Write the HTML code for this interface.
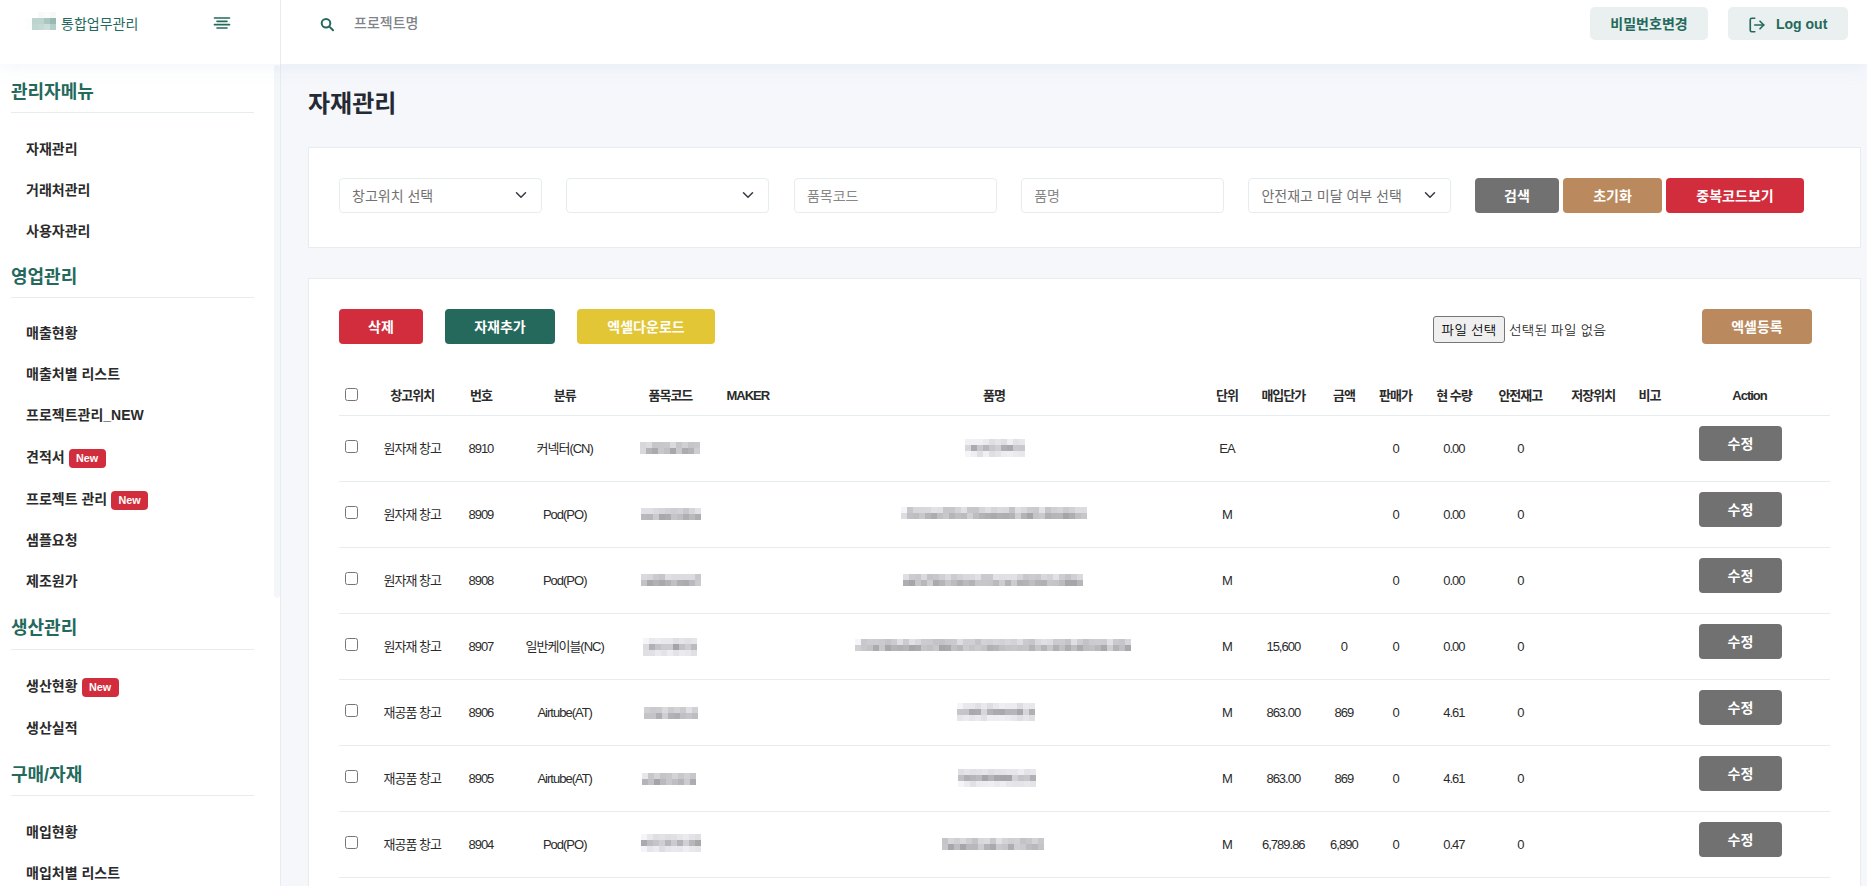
<!DOCTYPE html><html lang="ko"><head><meta charset="utf-8"><title>자재관리</title><style>
*{box-sizing:border-box;}
html,body{margin:0;padding:0;}
body{width:1867px;height:886px;overflow:hidden;background:#f5f7fb;font-family:"Liberation Sans", "Noto Sans CJK KR", sans-serif;font-size:14px;color:#2b2b2b;position:relative;}
.abs{position:absolute;}
#hdr{position:absolute;left:0;top:0;width:1867px;height:64px;background:#fff;box-shadow:0 0 20px rgba(149,175,215,.17);z-index:5;}
#hdr .vline{position:absolute;left:280px;top:0;width:1px;height:64px;background:#e6edef;}
#side{position:absolute;left:0;top:64px;width:281px;height:822px;background:#fff;border-right:1px solid #e6edef;z-index:2;}
#thumb{position:absolute;left:274px;top:1px;width:6px;height:533px;background:#f4f6fa;border-radius:3px;}
.logo-t{position:absolute;left:61px;top:13px;font-size:14px;line-height:22px;color:#24695c;white-space:nowrap;}
.sec-t{position:absolute;left:11px;font-size:18px;font-weight:700;color:#24695c;line-height:24px;white-space:nowrap;}
.sec-l{position:absolute;left:11px;width:243px;height:1px;background:#e6edef;}
.mi{position:absolute;left:26px;font-size:14px;font-weight:700;color:#2b2b2b;line-height:20px;white-space:nowrap;}
.badge{display:inline-block;vertical-align:middle;background:#d22d3d;color:#fff;font-size:10.8px;font-weight:700;line-height:19px;height:19px;padding:0 7.4px;border-radius:4px;margin-left:4px;position:relative;top:.5px;}
.hbtn{position:absolute;top:7px;height:33px;background:#e9f0ef;border-radius:5px;color:#24695c;font-weight:700;font-size:14px;line-height:35px;text-align:center;white-space:nowrap;}
h3.pt{position:absolute;left:308px;top:87px;margin:0;font-size:24px;line-height:34px;font-weight:700;color:#242934;white-space:nowrap;}
.card{position:absolute;left:308px;width:1553px;background:#fff;border:1px solid #e6edef;}
.fc{position:absolute;top:178px;height:35px;width:203px;border:1px solid #e6edef;border-radius:4px;background:#fff;color:#717171;font-size:14px;line-height:34px;padding-left:12px;white-space:nowrap;}
.fc.ph{color:#878787;}
.fc svg{position:absolute;right:12.1px;top:10.2px;}
.btn{position:absolute;display:block;border:0;padding:0;margin:0;font-family:inherit;cursor:pointer;height:35px;border-radius:4px;color:#fff;font-weight:700;font-size:14px;line-height:37px;text-align:center;white-space:nowrap;overflow:hidden;}
.b-gray{background:#717171;}
.b-tan{background:#ba895d;}
.b-red{background:#d22d3d;}
.b-teal{background:#24695c;}
.b-yel{background:#e2c636;}
.th{position:absolute;top:386px;height:20px;line-height:20px;font-size:13px;font-weight:700;letter-spacing:-1px;color:#2b2b2b;text-align:center;white-space:nowrap;transform:translateX(-50%);}
.td{position:absolute;height:20px;line-height:20px;font-size:13px;letter-spacing:-1px;color:#2b2b2b;text-align:center;white-space:nowrap;transform:translateX(-50%);}
.hl{position:absolute;left:339px;width:1491px;height:1px;background:#e6edef;}
.cb{position:absolute;left:345px;width:13px;height:13px;margin:0;padding:0;}
.mz{position:absolute;display:flex;flex-wrap:wrap;overflow:hidden;}
.mz i{display:block;width:6px;height:6px;}
</style></head><body>
<div id="hdr">
<div class="abs" style="left:26px;top:12px;width:30px;height:18px;display:flex;flex-wrap:wrap;">
<i style="display:block;width:6px;height:6px;background:#fff"></i>
<i style="display:block;width:6px;height:6px;background:#fff"></i>
<i style="display:block;width:6px;height:6px;background:#f7faf9"></i>
<i style="display:block;width:6px;height:6px;background:#fbfcfc"></i>
<i style="display:block;width:6px;height:6px;background:#f6f9f8"></i>
<i style="display:block;width:6px;height:6px;background:#fcfdfd"></i>
<i style="display:block;width:6px;height:6px;background:#bcd3ce"></i>
<i style="display:block;width:6px;height:6px;background:#bdd3ce"></i>
<i style="display:block;width:6px;height:6px;background:#a9c6c0"></i>
<i style="display:block;width:6px;height:6px;background:#98bab3"></i>
<i style="display:block;width:6px;height:6px;background:#fcfdfd"></i>
<i style="display:block;width:6px;height:6px;background:#c0d6d1"></i>
<i style="display:block;width:6px;height:6px;background:#c4d8d4"></i>
<i style="display:block;width:6px;height:6px;background:#ccdeda"></i>
<i style="display:block;width:6px;height:6px;background:#b5cec9"></i>
</div>
<div class="logo-t">통합업무관리</div>
<svg class="abs" style="left:212.2px;top:12.7px" width="20" height="20" viewBox="0 0 24 24" fill="none" stroke="#24695c" stroke-width="2" stroke-linecap="round" stroke-linejoin="round"><line x1="18" y1="10" x2="6" y2="10"/><line x1="21" y1="6" x2="3" y2="6"/><line x1="21" y1="14" x2="3" y2="14"/><line x1="18" y1="18" x2="6" y2="18"/></svg>
<div class="vline"></div>
<svg class="abs" style="left:320px;top:17px" width="15" height="15" viewBox="0 0 15 15" fill="none" stroke="#24695c" stroke-width="2" stroke-linecap="round"><circle cx="6" cy="6.2" r="4.3"/><line x1="9.4" y1="9.6" x2="13" y2="13.2"/></svg>
<div class="abs" style="left:354px;top:12px;font-size:14px;line-height:22px;color:#808389;font-weight:500;white-space:nowrap;">프로젝트명</div>
<div class="hbtn" style="left:1590px;width:118px;">비밀번호변경</div>
<div class="hbtn" style="left:1728px;width:120px;text-align:left;padding-left:48px;">Log out<svg class="abs" style="left:19.9px;top:8.9px" width="18" height="18" viewBox="0 0 24 24" fill="none" stroke="#24695c" stroke-width="2.2" stroke-linecap="round" stroke-linejoin="round"><path d="M9 21H5a2 2 0 0 1-2-2V5a2 2 0 0 1 2-2h4"/><polyline points="16 17 21 12 16 7"/><line x1="21" y1="12" x2="9" y2="12"/></svg></div>
</div>
<div id="side"><div id="thumb"></div>
<div class="sec-t" style="top:16px">관리자메뉴</div>
<div class="sec-l" style="top:48px"></div>
<div class="mi" style="top:75px">자재관리</div>
<div class="mi" style="top:116px">거래처관리</div>
<div class="mi" style="top:157px">사용자관리</div>
<div class="sec-t" style="top:201px">영업관리</div>
<div class="sec-l" style="top:233px"></div>
<div class="mi" style="top:259px">매출현황</div>
<div class="mi" style="top:300px">매출처별 리스트</div>
<div class="mi" style="top:341px">프로젝트관리_NEW</div>
<div class="mi" style="top:383px">견적서<span class="badge">New</span></div>
<div class="mi" style="top:425px">프로젝트 관리<span class="badge">New</span></div>
<div class="mi" style="top:466px">샘플요청</div>
<div class="mi" style="top:507px">제조원가</div>
<div class="sec-t" style="top:552px">생산관리</div>
<div class="sec-l" style="top:585px"></div>
<div class="mi" style="top:612px">생산현황<span class="badge">New</span></div>
<div class="mi" style="top:654px">생산실적</div>
<div class="sec-t" style="top:699px">구매/자재</div>
<div class="sec-l" style="top:731px"></div>
<div class="mi" style="top:758px">매입현황</div>
<div class="mi" style="top:799px">매입처별 리스트</div>
</div>
<h3 class="pt">자재관리</h3>
<div class="card" style="top:147px;height:101px;"></div>
<div class="fc" style="left:339.0px">창고위치 선택<svg width="16" height="12" viewBox="0 0 16 16" preserveAspectRatio="xMidYMid meet" fill="none" stroke="#343a40" stroke-width="2" stroke-linecap="round" stroke-linejoin="round"><path d="m2 5 6 6 6-6"/></svg></div>
<div class="fc" style="left:566.4px"><svg width="16" height="12" viewBox="0 0 16 16" preserveAspectRatio="xMidYMid meet" fill="none" stroke="#343a40" stroke-width="2" stroke-linecap="round" stroke-linejoin="round"><path d="m2 5 6 6 6-6"/></svg></div>
<div class="fc ph" style="left:793.9px">품목코드</div>
<div class="fc ph" style="left:1021.2px">품명</div>
<div class="fc" style="left:1248.4px">안전재고 미달 여부 선택<svg width="16" height="12" viewBox="0 0 16 16" preserveAspectRatio="xMidYMid meet" fill="none" stroke="#343a40" stroke-width="2" stroke-linecap="round" stroke-linejoin="round"><path d="m2 5 6 6 6-6"/></svg></div>
<button type="button" class="btn b-gray" style="left:1475px;top:178px;width:84px;">검색</button>
<button type="button" class="btn b-tan" style="left:1563px;top:178px;width:99px;">초기화</button>
<button type="button" class="btn b-red" style="left:1666px;top:178px;width:138px;">중복코드보기</button>
<div class="card" style="top:278px;height:640px;"></div>
<button type="button" class="btn b-red" style="left:339px;top:309px;width:84px;">삭제</button>
<button type="button" class="btn b-teal" style="left:445px;top:309px;width:110px;">자재추가</button>
<button type="button" class="btn b-yel" style="left:577px;top:309px;width:138px;">엑셀다운로드</button>
<div class="abs" style="left:1433px;top:316px;width:72px;height:26.5px;border:1px solid #767676;border-radius:3px;background:#efefef;font-family:'Liberation Sans','NanumGothic',sans-serif;font-size:13.33px;line-height:27px;letter-spacing:.2px;text-align:center;color:#000;white-space:nowrap;overflow:hidden;">파일 선택</div>
<div class="abs" style="left:1509px;top:319.4px;font-family:'Liberation Sans','NanumGothic',sans-serif;font-size:13.33px;line-height:24px;letter-spacing:.2px;color:#2b2b2b;white-space:nowrap;">선택된 파일 없음</div>
<button type="button" class="btn b-tan" style="left:1702px;top:309px;width:110px;">엑셀등록</button>
<input type="checkbox" class="cb" style="top:388px">
<div class="th" style="left:412.2px">창고위치</div>
<div class="th" style="left:480.9px">번호</div>
<div class="th" style="left:564.7px">분류</div>
<div class="th" style="left:670.4px">품목코드</div>
<div class="th" style="left:747.8px">MAKER</div>
<div class="th" style="left:994.0px">품명</div>
<div class="th" style="left:1226.9px">단위</div>
<div class="th" style="left:1283.3px">매입단가</div>
<div class="th" style="left:1343.9px">금액</div>
<div class="th" style="left:1395.5px">판매가</div>
<div class="th" style="left:1453.9px">현 수량</div>
<div class="th" style="left:1520.3px">안전재고</div>
<div class="th" style="left:1593.2px">저장위치</div>
<div class="th" style="left:1649.5px">비고</div>
<div class="th" style="left:1749.5px">Action</div>
<div class="hl" style="top:415px"></div>
<input type="checkbox" class="cb" style="top:440px">
<div class="td" style="left:412.2px;top:439.0px">원자재 창고</div>
<div class="td" style="left:480.9px;top:439.0px">8910</div>
<div class="td" style="left:564.7px;top:439.0px">커넥터(CN)</div>
<div class="td" style="left:1226.9px;top:439.0px">EA</div>
<div class="td" style="left:1395.5px;top:439.0px">0</div>
<div class="td" style="left:1453.9px;top:439.0px">0.00</div>
<div class="td" style="left:1520.3px;top:439.0px">0</div>
<div class="mz" style="left:640px;top:442px;width:60px;height:12px"><i style="background:rgb(215,215,219)"></i><i style="background:rgb(220,220,224)"></i><i style="background:rgb(198,198,202)"></i><i style="background:rgb(199,199,203)"></i><i style="background:rgb(201,201,205)"></i><i style="background:rgb(218,218,222)"></i><i style="background:rgb(198,198,202)"></i><i style="background:rgb(208,208,212)"></i><i style="background:rgb(197,197,201)"></i><i style="background:rgb(200,200,204)"></i><i style="background:rgb(217,217,221)"></i><i style="background:rgb(180,180,184)"></i><i style="background:rgb(170,170,174)"></i><i style="background:rgb(200,200,204)"></i><i style="background:rgb(192,192,196)"></i><i style="background:rgb(168,168,172)"></i><i style="background:rgb(201,201,205)"></i><i style="background:rgb(172,172,176)"></i><i style="background:rgb(179,179,183)"></i><i style="background:rgb(205,205,209)"></i></div>
<div class="mz" style="left:965px;top:439px;width:60px;height:18px"><i style="background:rgb(240,240,244)"></i><i style="background:rgb(240,240,244)"></i><i style="background:rgb(240,240,244)"></i><i style="background:rgb(234,234,238)"></i><i style="background:rgb(223,223,227)"></i><i style="background:rgb(229,229,233)"></i><i style="background:rgb(223,223,227)"></i><i style="background:rgb(239,239,243)"></i><i style="background:rgb(226,226,230)"></i><i style="background:rgb(231,231,235)"></i><i style="background:rgb(216,216,220)"></i><i style="background:rgb(172,172,176)"></i><i style="background:rgb(201,201,205)"></i><i style="background:rgb(184,184,188)"></i><i style="background:rgb(200,200,204)"></i><i style="background:rgb(208,208,212)"></i><i style="background:rgb(176,176,180)"></i><i style="background:rgb(171,171,175)"></i><i style="background:rgb(202,202,206)"></i><i style="background:rgb(201,201,205)"></i><i style="background:rgb(245,245,249)"></i><i style="background:rgb(239,239,243)"></i><i style="background:rgb(224,224,228)"></i><i style="background:rgb(240,240,244)"></i><i style="background:rgb(223,223,227)"></i><i style="background:rgb(228,228,232)"></i><i style="background:rgb(237,237,241)"></i><i style="background:rgb(239,239,243)"></i><i style="background:rgb(235,235,239)"></i><i style="background:rgb(232,232,236)"></i></div>
<button type="button" class="btn b-gray" style="left:1699px;top:426px;width:83px;">수정</button>
<div class="hl" style="top:481px"></div>
<input type="checkbox" class="cb" style="top:506px">
<div class="td" style="left:412.2px;top:505.0px">원자재 창고</div>
<div class="td" style="left:480.9px;top:505.0px">8909</div>
<div class="td" style="left:564.7px;top:505.0px">Pod(PO)</div>
<div class="td" style="left:1226.9px;top:505.0px">M</div>
<div class="td" style="left:1395.5px;top:505.0px">0</div>
<div class="td" style="left:1453.9px;top:505.0px">0.00</div>
<div class="td" style="left:1520.3px;top:505.0px">0</div>
<div class="mz" style="left:641px;top:508px;width:60px;height:12px"><i style="background:rgb(224,224,228)"></i><i style="background:rgb(224,224,228)"></i><i style="background:rgb(218,218,222)"></i><i style="background:rgb(214,214,218)"></i><i style="background:rgb(210,210,214)"></i><i style="background:rgb(206,206,210)"></i><i style="background:rgb(210,210,214)"></i><i style="background:rgb(200,200,204)"></i><i style="background:rgb(214,214,218)"></i><i style="background:rgb(226,226,230)"></i><i style="background:rgb(186,186,190)"></i><i style="background:rgb(183,183,187)"></i><i style="background:rgb(203,203,207)"></i><i style="background:rgb(169,169,173)"></i><i style="background:rgb(172,172,176)"></i><i style="background:rgb(197,197,201)"></i><i style="background:rgb(191,191,195)"></i><i style="background:rgb(175,175,179)"></i><i style="background:rgb(186,186,190)"></i><i style="background:rgb(174,174,178)"></i></div>
<div class="mz" style="left:901px;top:507px;width:186px;height:12px"><i style="background:rgb(245,245,249)"></i><i style="background:rgb(199,199,203)"></i><i style="background:rgb(215,215,219)"></i><i style="background:rgb(216,216,220)"></i><i style="background:rgb(217,217,221)"></i><i style="background:rgb(226,226,230)"></i><i style="background:rgb(224,224,228)"></i><i style="background:rgb(199,199,203)"></i><i style="background:rgb(200,200,204)"></i><i style="background:rgb(212,212,216)"></i><i style="background:rgb(225,225,229)"></i><i style="background:rgb(199,199,203)"></i><i style="background:rgb(198,198,202)"></i><i style="background:rgb(214,214,218)"></i><i style="background:rgb(223,223,227)"></i><i style="background:rgb(213,213,217)"></i><i style="background:rgb(219,219,223)"></i><i style="background:rgb(217,217,221)"></i><i style="background:rgb(196,196,200)"></i><i style="background:rgb(224,224,228)"></i><i style="background:rgb(217,217,221)"></i><i style="background:rgb(205,205,209)"></i><i style="background:rgb(202,202,206)"></i><i style="background:rgb(226,226,230)"></i><i style="background:rgb(198,198,202)"></i><i style="background:rgb(208,208,212)"></i><i style="background:rgb(213,213,217)"></i><i style="background:rgb(203,203,207)"></i><i style="background:rgb(210,210,214)"></i><i style="background:rgb(220,220,224)"></i><i style="background:rgb(220,220,224)"></i><i style="background:rgb(221,221,225)"></i><i style="background:rgb(193,193,197)"></i><i style="background:rgb(190,190,194)"></i><i style="background:rgb(200,200,204)"></i><i style="background:rgb(182,182,186)"></i><i style="background:rgb(173,173,177)"></i><i style="background:rgb(192,192,196)"></i><i style="background:rgb(200,200,204)"></i><i style="background:rgb(182,182,186)"></i><i style="background:rgb(191,191,195)"></i><i style="background:rgb(187,187,191)"></i><i style="background:rgb(208,208,212)"></i><i style="background:rgb(189,189,193)"></i><i style="background:rgb(179,179,183)"></i><i style="background:rgb(174,174,178)"></i><i style="background:rgb(170,170,174)"></i><i style="background:rgb(176,176,180)"></i><i style="background:rgb(174,174,178)"></i><i style="background:rgb(179,179,183)"></i><i style="background:rgb(207,207,211)"></i><i style="background:rgb(179,179,183)"></i><i style="background:rgb(165,165,169)"></i><i style="background:rgb(196,196,200)"></i><i style="background:rgb(202,202,206)"></i><i style="background:rgb(176,176,180)"></i><i style="background:rgb(181,181,185)"></i><i style="background:rgb(183,183,187)"></i><i style="background:rgb(165,165,169)"></i><i style="background:rgb(174,174,178)"></i><i style="background:rgb(191,191,195)"></i><i style="background:rgb(199,199,203)"></i></div>
<button type="button" class="btn b-gray" style="left:1699px;top:492px;width:83px;">수정</button>
<div class="hl" style="top:547px"></div>
<input type="checkbox" class="cb" style="top:572px">
<div class="td" style="left:412.2px;top:571.0px">원자재 창고</div>
<div class="td" style="left:480.9px;top:571.0px">8908</div>
<div class="td" style="left:564.7px;top:571.0px">Pod(PO)</div>
<div class="td" style="left:1226.9px;top:571.0px">M</div>
<div class="td" style="left:1395.5px;top:571.0px">0</div>
<div class="td" style="left:1453.9px;top:571.0px">0.00</div>
<div class="td" style="left:1520.3px;top:571.0px">0</div>
<div class="mz" style="left:641px;top:574px;width:60px;height:12px"><i style="background:rgb(218,218,222)"></i><i style="background:rgb(215,215,219)"></i><i style="background:rgb(203,203,207)"></i><i style="background:rgb(198,198,202)"></i><i style="background:rgb(224,224,228)"></i><i style="background:rgb(220,220,224)"></i><i style="background:rgb(220,220,224)"></i><i style="background:rgb(220,220,224)"></i><i style="background:rgb(220,220,224)"></i><i style="background:rgb(201,201,205)"></i><i style="background:rgb(195,195,199)"></i><i style="background:rgb(168,168,172)"></i><i style="background:rgb(177,177,181)"></i><i style="background:rgb(169,169,173)"></i><i style="background:rgb(178,178,182)"></i><i style="background:rgb(193,193,197)"></i><i style="background:rgb(175,175,179)"></i><i style="background:rgb(172,172,176)"></i><i style="background:rgb(186,186,190)"></i><i style="background:rgb(203,203,207)"></i></div>
<div class="mz" style="left:903px;top:574px;width:180px;height:12px"><i style="background:rgb(223,223,227)"></i><i style="background:rgb(204,204,208)"></i><i style="background:rgb(201,201,205)"></i><i style="background:rgb(218,218,222)"></i><i style="background:rgb(196,196,200)"></i><i style="background:rgb(199,199,203)"></i><i style="background:rgb(208,208,212)"></i><i style="background:rgb(219,219,223)"></i><i style="background:rgb(204,204,208)"></i><i style="background:rgb(211,211,215)"></i><i style="background:rgb(217,217,221)"></i><i style="background:rgb(218,218,222)"></i><i style="background:rgb(225,225,229)"></i><i style="background:rgb(202,202,206)"></i><i style="background:rgb(202,202,206)"></i><i style="background:rgb(226,226,230)"></i><i style="background:rgb(224,224,228)"></i><i style="background:rgb(225,225,229)"></i><i style="background:rgb(225,225,229)"></i><i style="background:rgb(214,214,218)"></i><i style="background:rgb(200,200,204)"></i><i style="background:rgb(204,204,208)"></i><i style="background:rgb(201,201,205)"></i><i style="background:rgb(216,216,220)"></i><i style="background:rgb(211,211,215)"></i><i style="background:rgb(225,225,229)"></i><i style="background:rgb(205,205,209)"></i><i style="background:rgb(196,196,200)"></i><i style="background:rgb(208,208,212)"></i><i style="background:rgb(218,218,222)"></i><i style="background:rgb(174,174,178)"></i><i style="background:rgb(166,166,170)"></i><i style="background:rgb(198,198,202)"></i><i style="background:rgb(184,184,188)"></i><i style="background:rgb(206,206,210)"></i><i style="background:rgb(170,170,174)"></i><i style="background:rgb(181,181,185)"></i><i style="background:rgb(198,198,202)"></i><i style="background:rgb(188,188,192)"></i><i style="background:rgb(175,175,179)"></i><i style="background:rgb(187,187,191)"></i><i style="background:rgb(179,179,183)"></i><i style="background:rgb(199,199,203)"></i><i style="background:rgb(199,199,203)"></i><i style="background:rgb(197,197,201)"></i><i style="background:rgb(186,186,190)"></i><i style="background:rgb(205,205,209)"></i><i style="background:rgb(179,179,183)"></i><i style="background:rgb(204,204,208)"></i><i style="background:rgb(177,177,181)"></i><i style="background:rgb(180,180,184)"></i><i style="background:rgb(190,190,194)"></i><i style="background:rgb(179,179,183)"></i><i style="background:rgb(177,177,181)"></i><i style="background:rgb(198,198,202)"></i><i style="background:rgb(196,196,200)"></i><i style="background:rgb(187,187,191)"></i><i style="background:rgb(166,166,170)"></i><i style="background:rgb(166,166,170)"></i><i style="background:rgb(182,182,186)"></i></div>
<button type="button" class="btn b-gray" style="left:1699px;top:558px;width:83px;">수정</button>
<div class="hl" style="top:613px"></div>
<input type="checkbox" class="cb" style="top:638px">
<div class="td" style="left:412.2px;top:637.0px">원자재 창고</div>
<div class="td" style="left:480.9px;top:637.0px">8907</div>
<div class="td" style="left:564.7px;top:637.0px">일반케이블(NC)</div>
<div class="td" style="left:1226.9px;top:637.0px">M</div>
<div class="td" style="left:1283.3px;top:637.0px">15,600</div>
<div class="td" style="left:1343.9px;top:637.0px">0</div>
<div class="td" style="left:1395.5px;top:637.0px">0</div>
<div class="td" style="left:1453.9px;top:637.0px">0.00</div>
<div class="td" style="left:1520.3px;top:637.0px">0</div>
<div class="mz" style="left:643px;top:638px;width:54px;height:18px"><i style="background:rgb(245,245,249)"></i><i style="background:rgb(233,233,237)"></i><i style="background:rgb(236,236,240)"></i><i style="background:rgb(233,233,237)"></i><i style="background:rgb(233,233,237)"></i><i style="background:rgb(224,224,228)"></i><i style="background:rgb(229,229,233)"></i><i style="background:rgb(225,225,229)"></i><i style="background:rgb(229,229,233)"></i><i style="background:rgb(220,220,224)"></i><i style="background:rgb(178,178,182)"></i><i style="background:rgb(195,195,199)"></i><i style="background:rgb(204,204,208)"></i><i style="background:rgb(204,204,208)"></i><i style="background:rgb(165,165,169)"></i><i style="background:rgb(195,195,199)"></i><i style="background:rgb(206,206,210)"></i><i style="background:rgb(187,187,191)"></i><i style="background:rgb(224,224,228)"></i><i style="background:rgb(225,225,229)"></i><i style="background:rgb(234,234,238)"></i><i style="background:rgb(228,228,232)"></i><i style="background:rgb(237,237,241)"></i><i style="background:rgb(227,227,231)"></i><i style="background:rgb(235,235,239)"></i><i style="background:rgb(232,232,236)"></i><i style="background:rgb(224,224,228)"></i></div>
<div class="mz" style="left:855px;top:639px;width:276px;height:12px"><i style="background:rgb(245,245,249)"></i><i style="background:rgb(200,200,204)"></i><i style="background:rgb(205,205,209)"></i><i style="background:rgb(205,205,209)"></i><i style="background:rgb(203,203,207)"></i><i style="background:rgb(196,196,200)"></i><i style="background:rgb(204,204,208)"></i><i style="background:rgb(224,224,228)"></i><i style="background:rgb(204,204,208)"></i><i style="background:rgb(225,225,229)"></i><i style="background:rgb(217,217,221)"></i><i style="background:rgb(204,204,208)"></i><i style="background:rgb(203,203,207)"></i><i style="background:rgb(196,196,200)"></i><i style="background:rgb(195,195,199)"></i><i style="background:rgb(201,201,205)"></i><i style="background:rgb(203,203,207)"></i><i style="background:rgb(222,222,226)"></i><i style="background:rgb(207,207,211)"></i><i style="background:rgb(208,208,212)"></i><i style="background:rgb(196,196,200)"></i><i style="background:rgb(211,211,215)"></i><i style="background:rgb(208,208,212)"></i><i style="background:rgb(213,213,217)"></i><i style="background:rgb(210,210,214)"></i><i style="background:rgb(215,215,219)"></i><i style="background:rgb(211,211,215)"></i><i style="background:rgb(221,221,225)"></i><i style="background:rgb(203,203,207)"></i><i style="background:rgb(198,198,202)"></i><i style="background:rgb(217,217,221)"></i><i style="background:rgb(224,224,228)"></i><i style="background:rgb(221,221,225)"></i><i style="background:rgb(203,203,207)"></i><i style="background:rgb(204,204,208)"></i><i style="background:rgb(196,196,200)"></i><i style="background:rgb(223,223,227)"></i><i style="background:rgb(206,206,210)"></i><i style="background:rgb(195,195,199)"></i><i style="background:rgb(204,204,208)"></i><i style="background:rgb(206,206,210)"></i><i style="background:rgb(204,204,208)"></i><i style="background:rgb(225,225,229)"></i><i style="background:rgb(202,202,206)"></i><i style="background:rgb(198,198,202)"></i><i style="background:rgb(215,215,219)"></i><i style="background:rgb(208,208,212)"></i><i style="background:rgb(200,200,204)"></i><i style="background:rgb(195,195,199)"></i><i style="background:rgb(171,171,175)"></i><i style="background:rgb(200,200,204)"></i><i style="background:rgb(168,168,172)"></i><i style="background:rgb(180,180,184)"></i><i style="background:rgb(177,177,181)"></i><i style="background:rgb(182,182,186)"></i><i style="background:rgb(167,167,171)"></i><i style="background:rgb(171,171,175)"></i><i style="background:rgb(197,197,201)"></i><i style="background:rgb(193,193,197)"></i><i style="background:rgb(200,200,204)"></i><i style="background:rgb(166,166,170)"></i><i style="background:rgb(169,169,173)"></i><i style="background:rgb(193,193,197)"></i><i style="background:rgb(185,185,189)"></i><i style="background:rgb(204,204,208)"></i><i style="background:rgb(197,197,201)"></i><i style="background:rgb(203,203,207)"></i><i style="background:rgb(197,197,201)"></i><i style="background:rgb(177,177,181)"></i><i style="background:rgb(182,182,186)"></i><i style="background:rgb(193,193,197)"></i><i style="background:rgb(197,197,201)"></i><i style="background:rgb(199,199,203)"></i><i style="background:rgb(195,195,199)"></i><i style="background:rgb(197,197,201)"></i><i style="background:rgb(180,180,184)"></i><i style="background:rgb(198,198,202)"></i><i style="background:rgb(181,181,185)"></i><i style="background:rgb(200,200,204)"></i><i style="background:rgb(177,177,181)"></i><i style="background:rgb(193,193,197)"></i><i style="background:rgb(173,173,177)"></i><i style="background:rgb(191,191,195)"></i><i style="background:rgb(172,172,176)"></i><i style="background:rgb(190,190,194)"></i><i style="background:rgb(193,193,197)"></i><i style="background:rgb(185,185,189)"></i><i style="background:rgb(169,169,173)"></i><i style="background:rgb(207,207,211)"></i><i style="background:rgb(180,180,184)"></i><i style="background:rgb(192,192,196)"></i><i style="background:rgb(169,169,173)"></i></div>
<button type="button" class="btn b-gray" style="left:1699px;top:624px;width:83px;">수정</button>
<div class="hl" style="top:679px"></div>
<input type="checkbox" class="cb" style="top:704px">
<div class="td" style="left:412.2px;top:703.0px">재공품 창고</div>
<div class="td" style="left:480.9px;top:703.0px">8906</div>
<div class="td" style="left:564.7px;top:703.0px">Airtube(AT)</div>
<div class="td" style="left:1226.9px;top:703.0px">M</div>
<div class="td" style="left:1283.3px;top:703.0px">863.00</div>
<div class="td" style="left:1343.9px;top:703.0px">869</div>
<div class="td" style="left:1395.5px;top:703.0px">0</div>
<div class="td" style="left:1453.9px;top:703.0px">4.61</div>
<div class="td" style="left:1520.3px;top:703.0px">0</div>
<div class="mz" style="left:644px;top:707px;width:54px;height:12px"><i style="background:rgb(208,208,212)"></i><i style="background:rgb(202,202,206)"></i><i style="background:rgb(204,204,208)"></i><i style="background:rgb(218,218,222)"></i><i style="background:rgb(204,204,208)"></i><i style="background:rgb(211,211,215)"></i><i style="background:rgb(203,203,207)"></i><i style="background:rgb(224,224,228)"></i><i style="background:rgb(209,209,213)"></i><i style="background:rgb(196,196,200)"></i><i style="background:rgb(196,196,200)"></i><i style="background:rgb(175,175,179)"></i><i style="background:rgb(207,207,211)"></i><i style="background:rgb(179,179,183)"></i><i style="background:rgb(175,175,179)"></i><i style="background:rgb(192,192,196)"></i><i style="background:rgb(197,197,201)"></i><i style="background:rgb(190,190,194)"></i></div>
<div class="mz" style="left:957px;top:703px;width:78px;height:18px"><i style="background:rgb(245,245,249)"></i><i style="background:rgb(233,233,237)"></i><i style="background:rgb(232,232,236)"></i><i style="background:rgb(224,224,228)"></i><i style="background:rgb(233,233,237)"></i><i style="background:rgb(222,222,226)"></i><i style="background:rgb(232,232,236)"></i><i style="background:rgb(239,239,243)"></i><i style="background:rgb(236,236,240)"></i><i style="background:rgb(236,236,240)"></i><i style="background:rgb(222,222,226)"></i><i style="background:rgb(234,234,238)"></i><i style="background:rgb(232,232,236)"></i><i style="background:rgb(198,198,202)"></i><i style="background:rgb(197,197,201)"></i><i style="background:rgb(169,169,173)"></i><i style="background:rgb(172,172,176)"></i><i style="background:rgb(215,215,219)"></i><i style="background:rgb(179,179,183)"></i><i style="background:rgb(171,171,175)"></i><i style="background:rgb(170,170,174)"></i><i style="background:rgb(181,181,185)"></i><i style="background:rgb(182,182,186)"></i><i style="background:rgb(167,167,171)"></i><i style="background:rgb(214,214,218)"></i><i style="background:rgb(176,176,180)"></i><i style="background:rgb(230,230,234)"></i><i style="background:rgb(235,235,239)"></i><i style="background:rgb(230,230,234)"></i><i style="background:rgb(234,234,238)"></i><i style="background:rgb(226,226,230)"></i><i style="background:rgb(239,239,243)"></i><i style="background:rgb(238,238,242)"></i><i style="background:rgb(240,240,244)"></i><i style="background:rgb(237,237,241)"></i><i style="background:rgb(232,232,236)"></i><i style="background:rgb(224,224,228)"></i><i style="background:rgb(230,230,234)"></i><i style="background:rgb(223,223,227)"></i></div>
<button type="button" class="btn b-gray" style="left:1699px;top:690px;width:83px;">수정</button>
<div class="hl" style="top:745px"></div>
<input type="checkbox" class="cb" style="top:770px">
<div class="td" style="left:412.2px;top:769.0px">재공품 창고</div>
<div class="td" style="left:480.9px;top:769.0px">8905</div>
<div class="td" style="left:564.7px;top:769.0px">Airtube(AT)</div>
<div class="td" style="left:1226.9px;top:769.0px">M</div>
<div class="td" style="left:1283.3px;top:769.0px">863.00</div>
<div class="td" style="left:1343.9px;top:769.0px">869</div>
<div class="td" style="left:1395.5px;top:769.0px">0</div>
<div class="td" style="left:1453.9px;top:769.0px">4.61</div>
<div class="td" style="left:1520.3px;top:769.0px">0</div>
<div class="mz" style="left:642px;top:773px;width:54px;height:12px"><i style="background:rgb(231,231,235)"></i><i style="background:rgb(199,199,203)"></i><i style="background:rgb(212,212,216)"></i><i style="background:rgb(196,196,200)"></i><i style="background:rgb(200,200,204)"></i><i style="background:rgb(211,211,215)"></i><i style="background:rgb(200,200,204)"></i><i style="background:rgb(209,209,213)"></i><i style="background:rgb(199,199,203)"></i><i style="background:rgb(181,181,185)"></i><i style="background:rgb(194,194,198)"></i><i style="background:rgb(165,165,169)"></i><i style="background:rgb(186,186,190)"></i><i style="background:rgb(200,200,204)"></i><i style="background:rgb(191,191,195)"></i><i style="background:rgb(182,182,186)"></i><i style="background:rgb(204,204,208)"></i><i style="background:rgb(173,173,177)"></i></div>
<div class="mz" style="left:958px;top:769px;width:78px;height:18px"><i style="background:rgb(223,223,227)"></i><i style="background:rgb(229,229,233)"></i><i style="background:rgb(225,225,229)"></i><i style="background:rgb(227,227,231)"></i><i style="background:rgb(230,230,234)"></i><i style="background:rgb(223,223,227)"></i><i style="background:rgb(227,227,231)"></i><i style="background:rgb(228,228,232)"></i><i style="background:rgb(231,231,235)"></i><i style="background:rgb(231,231,235)"></i><i style="background:rgb(238,238,242)"></i><i style="background:rgb(228,228,232)"></i><i style="background:rgb(231,231,235)"></i><i style="background:rgb(193,193,197)"></i><i style="background:rgb(176,176,180)"></i><i style="background:rgb(182,182,186)"></i><i style="background:rgb(187,187,191)"></i><i style="background:rgb(166,166,170)"></i><i style="background:rgb(181,181,185)"></i><i style="background:rgb(167,167,171)"></i><i style="background:rgb(165,165,169)"></i><i style="background:rgb(166,166,170)"></i><i style="background:rgb(211,211,215)"></i><i style="background:rgb(197,197,201)"></i><i style="background:rgb(200,200,204)"></i><i style="background:rgb(177,177,181)"></i><i style="background:rgb(245,245,249)"></i><i style="background:rgb(236,236,240)"></i><i style="background:rgb(225,225,229)"></i><i style="background:rgb(235,235,239)"></i><i style="background:rgb(237,237,241)"></i><i style="background:rgb(239,239,243)"></i><i style="background:rgb(234,234,238)"></i><i style="background:rgb(238,238,242)"></i><i style="background:rgb(231,231,235)"></i><i style="background:rgb(228,228,232)"></i><i style="background:rgb(229,229,233)"></i><i style="background:rgb(232,232,236)"></i><i style="background:rgb(228,228,232)"></i></div>
<button type="button" class="btn b-gray" style="left:1699px;top:756px;width:83px;">수정</button>
<div class="hl" style="top:811px"></div>
<input type="checkbox" class="cb" style="top:836px">
<div class="td" style="left:412.2px;top:835.0px">재공품 창고</div>
<div class="td" style="left:480.9px;top:835.0px">8904</div>
<div class="td" style="left:564.7px;top:835.0px">Pod(PO)</div>
<div class="td" style="left:1226.9px;top:835.0px">M</div>
<div class="td" style="left:1283.3px;top:835.0px">6,789.86</div>
<div class="td" style="left:1343.9px;top:835.0px">6,890</div>
<div class="td" style="left:1395.5px;top:835.0px">0</div>
<div class="td" style="left:1453.9px;top:835.0px">0.47</div>
<div class="td" style="left:1520.3px;top:835.0px">0</div>
<div class="mz" style="left:641px;top:834px;width:60px;height:18px"><i style="background:rgb(245,245,249)"></i><i style="background:rgb(233,233,237)"></i><i style="background:rgb(223,223,227)"></i><i style="background:rgb(226,226,230)"></i><i style="background:rgb(222,222,226)"></i><i style="background:rgb(224,224,228)"></i><i style="background:rgb(230,230,234)"></i><i style="background:rgb(235,235,239)"></i><i style="background:rgb(227,227,231)"></i><i style="background:rgb(223,223,227)"></i><i style="background:rgb(170,170,174)"></i><i style="background:rgb(189,189,193)"></i><i style="background:rgb(197,197,201)"></i><i style="background:rgb(207,207,211)"></i><i style="background:rgb(183,183,187)"></i><i style="background:rgb(203,203,207)"></i><i style="background:rgb(180,180,184)"></i><i style="background:rgb(209,209,213)"></i><i style="background:rgb(183,183,187)"></i><i style="background:rgb(167,167,171)"></i><i style="background:rgb(245,245,249)"></i><i style="background:rgb(230,230,234)"></i><i style="background:rgb(236,236,240)"></i><i style="background:rgb(222,222,226)"></i><i style="background:rgb(230,230,234)"></i><i style="background:rgb(233,233,237)"></i><i style="background:rgb(232,232,236)"></i><i style="background:rgb(239,239,243)"></i><i style="background:rgb(232,232,236)"></i><i style="background:rgb(229,229,233)"></i></div>
<div class="mz" style="left:942px;top:838px;width:102px;height:12px"><i style="background:rgb(197,197,201)"></i><i style="background:rgb(214,214,218)"></i><i style="background:rgb(208,208,212)"></i><i style="background:rgb(217,217,221)"></i><i style="background:rgb(206,206,210)"></i><i style="background:rgb(195,195,199)"></i><i style="background:rgb(216,216,220)"></i><i style="background:rgb(219,219,223)"></i><i style="background:rgb(200,200,204)"></i><i style="background:rgb(225,225,229)"></i><i style="background:rgb(212,212,216)"></i><i style="background:rgb(207,207,211)"></i><i style="background:rgb(210,210,214)"></i><i style="background:rgb(195,195,199)"></i><i style="background:rgb(200,200,204)"></i><i style="background:rgb(211,211,215)"></i><i style="background:rgb(200,200,204)"></i><i style="background:rgb(199,199,203)"></i><i style="background:rgb(167,167,171)"></i><i style="background:rgb(190,190,194)"></i><i style="background:rgb(166,166,170)"></i><i style="background:rgb(184,184,188)"></i><i style="background:rgb(184,184,188)"></i><i style="background:rgb(205,205,209)"></i><i style="background:rgb(179,179,183)"></i><i style="background:rgb(170,170,174)"></i><i style="background:rgb(202,202,206)"></i><i style="background:rgb(198,198,202)"></i><i style="background:rgb(174,174,178)"></i><i style="background:rgb(207,207,211)"></i><i style="background:rgb(203,203,207)"></i><i style="background:rgb(189,189,193)"></i><i style="background:rgb(185,185,189)"></i><i style="background:rgb(196,196,200)"></i></div>
<button type="button" class="btn b-gray" style="left:1699px;top:822px;width:83px;">수정</button>
<div class="hl" style="top:877px"></div>
</body></html>
